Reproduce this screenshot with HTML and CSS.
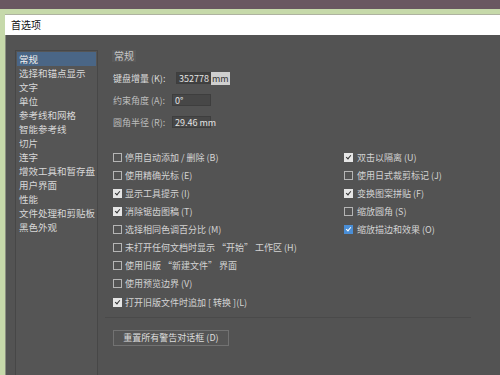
FILE: index.html
```html
<!DOCTYPE html>
<html lang="zh-CN">
<head>
  <meta charset="UTF-8" />
  <title>首选项</title>
  <link rel="stylesheet" href="styles.css">
</head>
<body>

  <div class="frame">
    <div class="titlebar">首选项</div>

    <div class="dialog">
      <ul class="sidebar">
        <li class="active">常规</li>
        <li>选择和锚点显示</li>
        <li>文字</li>
        <li>单位</li>
        <li>参考线和网格</li>
        <li>智能参考线</li>
        <li>切片</li>
        <li>连字</li>
        <li>增效工具和暂存盘</li>
        <li>用户界面</li>
        <li>性能</li>
        <li>文件处理和剪贴板</li>
        <li>黑色外观</li>
      </ul>

      <div class="main">
        <div class="section-title">常规</div>

        <div class="fields">
          <div class="field">
            <span class="label bright">键盘增量 (K):</span>
            <span class="input wide">352778 <span class="unit">mm</span></span>
          </div>
          <div class="field">
            <span class="label">约束角度 (A):</span>
            <span class="input">0°</span>
          </div>
          <div class="field">
            <span class="label">圆角半径 (R):</span>
            <span class="input">29.46 mm</span>
          </div>
        </div>

        <div class="options">
          <div class="col left">
            <label class="opt"><span class="box"></span>停用自动添加 / 删除 (B)</label>
            <label class="opt"><span class="box"></span>使用精确光标 (E)</label>
            <label class="opt"><span class="box checked"></span>显示工具提示 (I)</label>
            <label class="opt"><span class="box checked"></span>消除锯齿图稿 (T)</label>
            <label class="opt"><span class="box"></span>选择相同色调百分比 (M)</label>
            <label class="opt"><span class="box"></span>未打开任何文档时显示 “开始” 工作区 (H)</label>
            <label class="opt"><span class="box"></span>使用旧版 “新建文件” 界面</label>
            <label class="opt"><span class="box"></span>使用预览边界 (V)</label>
            <label class="opt last"><span class="box checked"></span>打开旧版文件时追加 [ 转换 ](L)</label>
          </div>
          <div class="col right">
            <label class="opt"><span class="box checked"></span>双击以隔离 (U)</label>
            <label class="opt"><span class="box"></span>使用日式裁剪标记 (J)</label>
            <label class="opt"><span class="box checked"></span>变换图案拼贴 (F)</label>
            <label class="opt"><span class="box"></span>缩放圆角 (S)</label>
            <label class="opt"><span class="box checked blue"></span>缩放描边和效果 (O)</label>
          </div>
        </div>

        <div class="separator"></div>

        <button class="reset">重置所有警告对话框 (D)</button>
      </div>
    </div>
  </div>

</body>
</html>
```

FILE: styles.css
```css
body {
  margin: 0;
  height: 375px;
  overflow: hidden;
  background: #6a5861;
  font-family: "Noto Sans CJK SC", "Noto Sans", sans-serif;
}

.frame {
  margin-top: 9px;
  height: 366px;
  border-top: 5px solid #c6d9aa;
  border-left: 5px solid #c6d9aa;
  display: flex;
  flex-direction: column;
}

.titlebar {
  height: 20px;
  line-height: 20px;
  border-top: 1px solid #aeb3a0;
  background: #fff;
  color: #111;
  font-size: 10px;
  padding-left: 6px;
}

.dialog {
  flex: 1;
  display: flex;
  background: #535353;
  border-left: 1px solid #8a8f80;
  padding-top: 15px;
}

.sidebar {
  list-style: none;
  margin: 0 0 0 9px;
  padding: 1px;
  width: 79px;
  border: 1px solid #474747;
  border-bottom: none;
  background: #555;
}

.sidebar li {
  height: 14px;
  line-height: 14px;
  padding-left: 2px;
  font-size: 9.5px;
  color: #d8d8d8;
  white-space: nowrap;
}

.sidebar li.active {
  background: #4a6686;
  color: #f0f0f0;
}

.main {
  flex: 1;
  padding-left: 15px;
  display: flex;
  flex-direction: column;
  align-items: flex-start;
}

.section-title {
  height: 12px;
  line-height: 12px;
  padding: 0 2px;
  margin-left: -1px;
  background: #5a5a5a;
  font-size: 10px;
  color: #c8c8c8;
}

.fields {
  margin-top: 10px;
  display: flex;
  flex-direction: column;
  gap: 10px;
}

.field {
  display: flex;
  align-items: center;
  height: 12px;
  font-size: 9px;
}

.label {
  color: #bdbdbd;
  width: 59px;
  white-space: nowrap;
}

.label.bright {
  color: #dcdcdc;
  width: 63px;
}

.input {
  box-sizing: border-box;
  width: 39px;
  height: 12px;
  line-height: 11px;
  padding-left: 2px;
  background: #474747;
  border: 1px solid #3e3e3e;
  color: #e4e4e4;
  font-size: 9px;
  white-space: nowrap;
}

.input.wide {
  width: 49px;
  background: #404040;
}

.unit {
  background: #cfcfcf;
  color: #333;
  padding: 0 1px;
}

.options {
  margin-top: 20px;
  display: flex;
}

.col {
  display: flex;
  flex-direction: column;
}

.col.left {
  width: 231px;
}

.opt {
  height: 18px;
  display: flex;
  align-items: center;
  gap: 3px;
  font-size: 9px;
  color: #d4d4d4;
  white-space: nowrap;
}

.opt.last {
  margin-top: 1px;
}

.col.right .opt {
  gap: 4px;
}

.box {
  box-sizing: border-box;
  width: 9px;
  height: 9px;
  border: 1px solid #b5b5b5;
  position: relative;
}

.box.checked {
  background: #e6e6e6;
  border-color: #e6e6e6;
}

.box.checked::after {
  content: "";
  position: absolute;
  left: 2px;
  top: 0px;
  width: 2px;
  height: 4px;
  border: solid #333;
  border-width: 0 1.5px 1.5px 0;
  transform: rotate(40deg);
}

.box.blue {
  background: #4a8ed6;
  border-color: #4a8ed6;
}

.box.blue::after {
  border-color: #fff;
}

.separator {
  margin-top: 6px;
  margin-left: -8px;
  width: 366px;
  height: 1px;
  background: #4a4a4a;
}

.reset {
  margin-top: 12px;
  width: 116px;
  height: 16px;
  padding: 0;
  background: #555;
  border: 1px solid #727272;
  color: #dcdcdc;
  font-family: inherit;
  font-size: 9px;
  line-height: 14px;
}
```
